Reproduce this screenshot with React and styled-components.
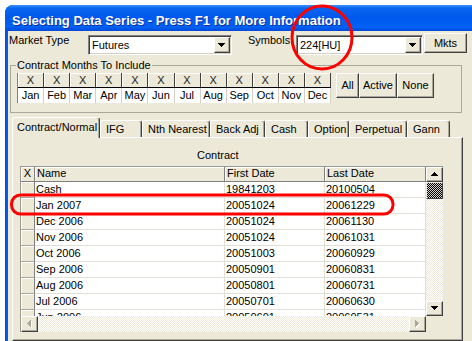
import React from 'react';
import styled, { createGlobalStyle } from 'styled-components';

const Global = createGlobalStyle`
  html, body { margin: 0; padding: 0; background: #fff; }
  body { font-family: "Liberation Sans", Arial, sans-serif; font-size: 11px; color: #000; }
  * { box-sizing: border-box; }
`;

const Screen = styled.div`
  position: relative;
  width: 472px;
  height: 341px;
  overflow: hidden;
  background: #fff;
`;

const Window = styled.div`
  margin: 5px 0 0 5px;
  width: 480px;
  height: 336px;
  display: flex;
  flex-direction: column;
  background: linear-gradient(90deg, #0831d9 0, #0a5ce6 1px, #0058ee 3px);
  border-radius: 8px 8px 0 0;
  overflow: hidden;
`;

const TitleBar = styled.div`
  flex: none;
  height: 26px;
  padding: 7px 0 0 7px;
  background: linear-gradient(180deg, #3d95ff 0%, #0a66f0 12%, #0058ee 45%, #0062f5 85%, #0048d8 100%);
  color: #fff;
  font-weight: bold;
  font-size: 13px;
  line-height: 18px;
  white-space: nowrap;
  text-shadow: 1px 1px #0f2f9a;
`;

const Body = styled.div`
  flex: 1;
  margin-left: 3px;
  background: #ece9d8;
  display: flex;
  flex-direction: column;
`;

const TopRow = styled.div`
  display: flex;
  align-items: flex-start;
  height: 22px;
  margin-top: 2px;
  padding-left: 1px;
`;

const FieldLabel = styled.span`
  flex: none;
  width: ${p => p.$w}px;
  margin-left: ${p => p.$ml || 0}px;
  margin-top: 1px;
  line-height: 13px;
`;

const Combo = styled.div`
  flex: none;
  width: ${p => p.$w}px;
  height: 20px;
  margin-top: 2px;
  display: flex;
  align-items: center;
  background: #fff;
  border: 1px solid;
  border-color: #808080 #fff #fff #808080;
  box-shadow: inset 1px 1px #404040, inset -1px -1px #d4d0c8;
  padding: 1px 1px 1px 3px;
`;

const ComboText = styled.span`
  flex: 1;
  line-height: 13px;
  padding-top: 1px;
`;

const RaisedBox = styled.div`
  background: #ece9d8;
  border: 1px solid;
  border-color: #fff #404040 #404040 #fff;
  box-shadow: inset -1px -1px #aca899;
  display: flex;
  align-items: center;
  justify-content: center;
`;

const DropButton = styled(RaisedBox)`
  flex: none;
  width: 16px;
  height: 16px;
`;

const PushButton = styled(RaisedBox)`
  flex: none;
  width: ${p => p.$w}px;
  height: ${p => p.$h}px;
  margin-left: ${p => p.$ml || 0}px;
  line-height: 13px;
`;

const Group = styled.fieldset`
  margin: 4px 0 0 2px;
  width: 452px;
  min-width: 0;
  padding: 1px 6px 9px 6px;
  border: 1px solid #aca899;
  display: flex;
  align-items: flex-start;
`;

const Legend = styled.legend`
  padding: 0 1px;
  margin-left: -1px;
  line-height: 13px;
`;

const MonthGrid = styled.div`
  flex: none;
  display: grid;
  grid-template-columns: repeat(12, 1fr);
  width: 314px;
  border-left: 1px solid #808080;
`;

const MonthCol = styled.div`
  display: flex;
  flex-direction: column;
`;

const XBox = styled.div`
  height: 15px;
  background: #ece9d8;
  border-right: 1px solid #404040;
  border-bottom: 1px solid #000;
  box-shadow: inset 1px 1px #fff;
  text-align: center;
  line-height: 14px;
  color: #222;
`;

const MonthName = styled.div`
  height: 15px;
  background: #fff;
  border-right: 1px solid #d4d0c8;
  text-align: center;
  line-height: 15px;
`;

const ButtonGroup = styled.div`
  display: flex;
  margin-left: 5px;
`;

const TabStrip = styled.div`
  display: flex;
  align-items: flex-end;
  height: 20px;
  margin: 4px 0 0 4px;
  position: relative;
  z-index: 1;
`;

const Tab = styled.div`
  flex: none;
  width: ${p => p.$w}px;
  height: ${p => (p.$active ? 21 : 17)}px;
  margin-bottom: ${p => (p.$active ? -1 : 0)}px;
  padding: ${p => (p.$active ? '3px 0 0 4px' : '2px 0 0 5px')};
  background: #ece9d8;
  border: 1px solid;
  border-bottom: none;
  border-color: #fff #404040 #404040 #fff;
  box-shadow: inset -1px 0 #aca899;
  border-radius: 3px 3px 0 0;
  line-height: 13px;
  white-space: nowrap;
  overflow: hidden;
`;

const Panel = styled.div`
  flex: 1;
  margin-left: 4px;
  width: 451px;
  border: 1px solid;
  border-color: #fff #404040 #404040 #fff;
  box-shadow: inset -1px -1px #aca899;
  padding: 11px 0 0 7px;
`;

const Caption = styled.div`
  padding-left: 177px;
  line-height: 13px;
  margin-bottom: 4px;
`;

const GridFrame = styled.div`
  width: 423px;
  height: 166px;
  display: grid;
  grid-template-columns: 1fr 17px;
  grid-template-rows: 1fr 16px;
  border-left: 1px solid #9a9890;
  border-top: 1px solid #9a9890;
  background: #fff;
`;

const DataArea = styled.div`
  overflow: hidden;
  background: #fff;
`;

const Row = styled.div`
  display: grid;
  grid-template-columns: 14px 190px 100px 101px;
  height: ${p => (p.$head ? 15 : 16)}px;
`;

const HeadCell = styled.div`
  background: #ece9d8;
  border-right: 1px solid #808080;
  border-bottom: 1px solid #808080;
  box-shadow: inset 1px 1px #fff;
  line-height: 13px;
  padding: 0 0 0 ${p => (p.$center ? 0 : 2)}px;
  text-align: ${p => (p.$center ? 'center' : 'left')};
  white-space: nowrap;
  overflow: hidden;
`;

const RowHead = styled.div`
  background: #ece9d8;
  border-right: 1px solid #808080;
  border-bottom: 1px solid #aca899;
  box-shadow: inset 1px 1px #fff;
`;

const Cell = styled.div`
  border-right: 1px solid #e2e0d6;
  border-bottom: 1px solid #e2e0d6;
  padding-left: 1px;
  line-height: 15px;
  white-space: nowrap;
  overflow: hidden;
`;

const VScroll = styled.div`
  display: flex;
  flex-direction: column;
`;

const HScroll = styled.div`
  display: flex;
`;

const ScrollBtn = styled(RaisedBox)`
  flex: none;
  width: ${p => p.$w}px;
  height: ${p => p.$h}px;
`;

const Track = styled.div`
  flex: 1;
  background: repeating-conic-gradient(#ece9d8 0 25%, #fff 0 50%) 0 0 / 2px 2px;
`;

const Thumb = styled.div`
  flex: none;
  height: 17px;
  border: 1px solid;
  border-color: #ece9d8 #404040 #404040 #ece9d8;
  background: repeating-conic-gradient(#000 0 25%, #d4d0c8 0 50%) 0 0 / 2px 2px;
`;

const Corner = styled.div`
  background: #ece9d8;
`;

const Overlay = styled.svg`
  position: absolute;
  left: 0;
  top: 0;
  pointer-events: none;
`;

const Arrow = ({ dir = 'down', color = '#000', shadow }) => {
  const pts = {
    down: '0,0 7,0 3.5,4',
    up: '0,4 7,4 3.5,0',
    left: '4,0 4,7 0,3.5',
    right: '0,0 0,7 4,3.5',
  }[dir];
  const vertical = dir === 'down' || dir === 'up';
  const w = vertical ? 8 : 5;
  const h = vertical ? 5 : 8;
  return (
    <svg width={w} height={h} viewBox={`0 0 ${w} ${h}`} shapeRendering="crispEdges">
      {shadow && <polygon points={pts} fill="#fff" transform="translate(1,1)" />}
      <polygon points={pts} fill={color} />
    </svg>
  );
};

const months = ['Jan', 'Feb', 'Mar', 'Apr', 'May', 'Jun', 'Jul', 'Aug', 'Sep', 'Oct', 'Nov', 'Dec'];

const tabs = [
  { label: 'Contract/Normal', w: 88, active: true },
  { label: 'IFG', w: 42 },
  { label: 'Nth Nearest', w: 68 },
  { label: 'Back Adj', w: 55 },
  { label: 'Cash', w: 43 },
  { label: 'Option', w: 41 },
  { label: 'Perpetual', w: 58 },
  { label: 'Gann', w: 43 },
];

const rows = [
  ['Cash', '19841203', '20100504'],
  ['Jan 2007', '20051024', '20061229'],
  ['Dec 2006', '20051024', '20061130'],
  ['Nov 2006', '20051024', '20061031'],
  ['Oct 2006', '20051003', '20060929'],
  ['Sep 2006', '20050901', '20060831'],
  ['Aug 2006', '20050801', '20060731'],
  ['Jul 2006', '20050701', '20060630'],
  ['Jun 2006', '20050601', '20060531'],
];

export default function App() {
  return (
    <Screen>
      <Global />
      <Window>
        <TitleBar>Selecting Data Series - Press F1 for More Information</TitleBar>
        <Body>
          <TopRow>
            <FieldLabel $w={79}>Market Type</FieldLabel>
            <Combo $w={144}>
              <ComboText>Futures</ComboText>
              <DropButton><Arrow dir="down" /></DropButton>
            </Combo>
            <FieldLabel $w={48} $ml={16}>Symbols</FieldLabel>
            <Combo $w={127}>
              <ComboText>224[HU]</ComboText>
              <DropButton><Arrow dir="down" /></DropButton>
            </Combo>
            <PushButton $w={43} $h={20} $ml={1}>Mkts</PushButton>
          </TopRow>

          <Group>
            <Legend>Contract Months To Include</Legend>
            <MonthGrid>
              {months.map(m => (
                <MonthCol key={m}>
                  <XBox>X</XBox>
                  <MonthName>{m}</MonthName>
                </MonthCol>
              ))}
            </MonthGrid>
            <ButtonGroup>
              <PushButton $w={23} $h={25}>All</PushButton>
              <PushButton $w={38} $h={25}>Active</PushButton>
              <PushButton $w={37} $h={25}>None</PushButton>
            </ButtonGroup>
          </Group>

          <TabStrip>
            {tabs.map(t => (
              <Tab key={t.label} $w={t.w} $active={t.active}>{t.label}</Tab>
            ))}
          </TabStrip>

          <Panel>
            <Caption>Contract</Caption>
            <GridFrame>
              <DataArea>
                <Row $head>
                  <HeadCell $center>X</HeadCell>
                  <HeadCell>Name</HeadCell>
                  <HeadCell>First Date</HeadCell>
                  <HeadCell>Last Date</HeadCell>
                </Row>
                {rows.map(r => (
                  <Row key={r[0]}>
                    <RowHead />
                    <Cell>{r[0]}</Cell>
                    <Cell>{r[1]}</Cell>
                    <Cell>{r[2]}</Cell>
                  </Row>
                ))}
              </DataArea>
              <VScroll>
                <ScrollBtn $w={17} $h={15}><Arrow dir="up" /></ScrollBtn>
                <Thumb />
                <Track />
                <ScrollBtn $w={17} $h={15}><Arrow dir="down" /></ScrollBtn>
              </VScroll>
              <HScroll>
                <ScrollBtn $w={17} $h={16}><Arrow dir="left" color="#aca899" shadow /></ScrollBtn>
                <Track />
                <ScrollBtn $w={17} $h={16}><Arrow dir="right" color="#aca899" shadow /></ScrollBtn>
              </HScroll>
              <Corner />
            </GridFrame>
          </Panel>
        </Body>
      </Window>
      <Overlay width="472" height="341" viewBox="0 0 472 341">
        <ellipse cx="322" cy="37.5" rx="30" ry="31.5" fill="none" stroke="#ff0000" strokeWidth="3" />
        <rect x="11.5" y="195" width="381.5" height="19" rx="9" fill="none" stroke="#ff0000" strokeWidth="3" />
      </Overlay>
    </Screen>
  );
}
